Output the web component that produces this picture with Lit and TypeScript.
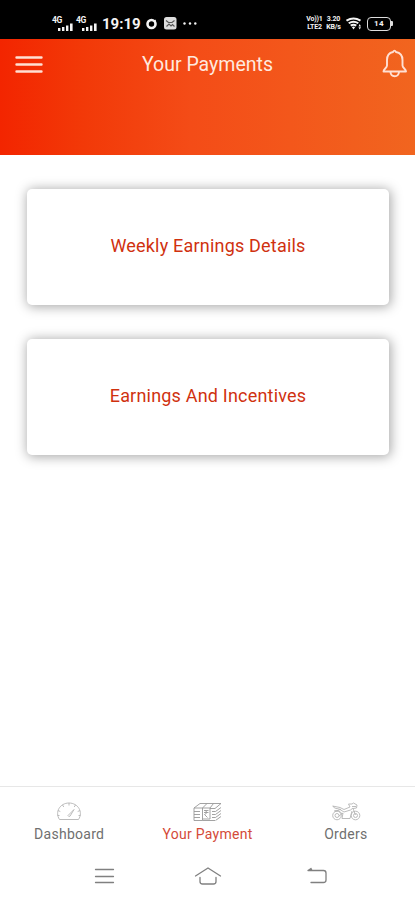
import { LitElement, html, css, svg } from "lit";
import { customElement } from "lit/decorators.js";
import { classMap } from "lit/directives/class-map.js";

const signalBars = svg`
  <rect x="0" y="5" width="2.4" height="3"/><rect x="4" y="4" width="2.4" height="4"/>
  <rect x="8" y="2.5" width="2.4" height="5.5"/><rect x="12" y="0.5" width="2.6" height="7.5"/>`;

@customElement("status-bar")
class StatusBar extends LitElement {
  static styles = css`
    :host { display: flex; height: 39px; background: #000; color: #f4f4f4; font-family: Roboto, sans-serif; box-sizing: border-box; padding: 4px 22px 0 52px; justify-content: space-between; }
    .group { display: flex; align-items: center; height: 39px; }
    .signal { display: flex; width: 24px; height: 16px; align-items: flex-start; }
    .gen { font-size: 8.5px; line-height: 8px; font-weight: 700; width: 6px; letter-spacing: -0.5px; }
    .signal svg { margin-top: 7px; }
    .clock { font-size: 15px; font-weight: 700; letter-spacing: 0; margin-left: 2px; width: 44px; line-height: 18px; }
    svg { display: block; flex: none; fill: #f4f4f4; }
    .photo { margin-left: 6px; }
    .dots { margin-left: 6px; }
    .tiny { display: flex; flex-direction: column; font-size: 7px; line-height: 8px; font-weight: 700; letter-spacing: -0.2px; text-align: center; white-space: nowrap; margin-top: -1px; }
    .tiny span { display: block; height: 8px; }
    .volte { width: 17px; margin-right: 2px; }
    .speed { width: 17px; margin-right: 4px; }
    .battery { display: flex; align-items: center; margin-left: 4px; }
    .level { box-sizing: border-box; width: 24px; height: 14px; border: 1.5px solid #ddd; border-radius: 4px; font-size: 8px; line-height: 12px; font-weight: 700; text-align: center; letter-spacing: 0.4px; }
    .tip { width: 2px; height: 5px; background: #ddd; border-radius: 0 1px 1px 0; }
  `;
  render() {
    return html`
      <div class="group">
        ${[0, 1].map(() => html`<div class="signal"><span class="gen">4G</span><svg width="15" height="8">${signalBars}</svg></div>`)}
        <span class="clock">19:19</span>
        <svg class="ring" width="12" height="12"><circle cx="5.500" cy="6" r="4" fill="none" stroke="#f4f4f4" stroke-width="2.6"/><path d="M7.500 3l2.500-1.500L9.500 4z"/></svg>
        <svg class="photo" width="13" height="13"><rect width="12.500" height="12.500" rx="2.500" fill="#ddd"/><path d="M2 3.500L4.500 5.500H8L10.500 3.500M2.500 9.500L5 7L7 9L8.500 7.500L10.500 9.500" fill="none" stroke="#555" stroke-width="1.100"/></svg>
        <svg class="dots" width="14" height="3"><circle cx="1.500" cy="1.500" r="1.200"/><circle cx="7" cy="1.500" r="1.200"/><circle cx="12.300" cy="1.500" r="1.200"/></svg>
      </div>
      <div class="group">
        <div class="tiny volte"><span>Vo))1</span><span>LTE2</span></div>
        <div class="tiny speed"><span>3.20</span><span>KB/s</span></div>
        <svg width="17" height="13" viewBox="0 0 17 13">
          <path d="M0.500 3.700Q7.500-0.800 14.500 3.700M2.700 6.300Q7.500 3 12.300 6.300M4.700 8.700Q7.500 6.800 10.300 8.700" fill="none" stroke="#f4f4f4" stroke-width="2"/>
          <path d="M5.800 10L7.500 12.500L9.200 10Q7.500 9 5.800 10ZM12.500 9.500L13.700 7L15 9.500ZM12.500 10.200H15L13.700 12.500Z"/>
        </svg>
        <div class="battery"><div class="level">14</div><div class="tip"></div></div>
      </div>`;
  }
}

@customElement("page-header")
class PageHeader extends LitElement {
  static styles = css`
    :host { display: grid; grid-template-columns: 44px 1fr 44px; height: 116px; box-sizing: border-box; padding-top: 8px; align-items: start; background: linear-gradient(90deg, #f32500 0%, #f23908 20%, #f44c17 46%, #f3571b 70%, #f1651f 100%); color: #ffe9df; font-family: Roboto, sans-serif; }
    h1 { margin: 0; text-align: center; font-weight: 400; font-size: 19.5px; line-height: 36px; letter-spacing: 0; }
    svg { display: block; fill: none; stroke: #ffe0d3; stroke-linecap: round; stroke-linejoin: round; }
    .menu { margin: 8px 0 0 15px; stroke-width: 2.4; }
    .bell { margin: 2px 0 0 11px; stroke-width: 1.9; }
  `;
  render() {
    return html`
      <svg class="menu" width="28" height="20"><path d="M1.500 2.500H26.500M1.500 9.500H26.500M1.500 16.500H26.500"/></svg>
      <h1>Your Payments</h1>
      <svg class="bell" width="26" height="30" viewBox="0 0 26 30">
        <path d="M11 3Q12.500.2 14 3C18.200 3.800 20.500 7 20.500 11V16.500C20.500 19 24 20 24 22.500H1.500C1.500 20 5 19 5 16.500V11C5 7 7.200 3.800 11 3Z"/>
        <path d="M8.500 23C8.800 28.600 16.500 28.600 17 23"/>
      </svg>`;
  }
}

@customElement("payment-card")
class PaymentCard extends LitElement {
  static styles = css`
    :host { display: flex; align-items: center; justify-content: center; height: 116px; border-radius: 5px; background: #fff; box-shadow: 1px 1px 12px 1px rgba(0, 0, 0, 0.34); color: #d0310f; font: 400 18px/22px Roboto, sans-serif; letter-spacing: 0.2px; box-sizing: border-box; padding-bottom: 3px; }
  `;
  render() {
    return html`<slot></slot>`;
  }
}

const gauge = svg`<svg width="26" height="19" viewBox="0 0 26 19"><path d="M3.500 17.500C-1.500 10 4 1 13 1S27.500 10 22.500 17.500ZM13 1V3.500M6.500 3L7.800 5M19.500 3L18.200 5M2 8.500L4.300 9.500M24 8.500L21.700 9.500M1.500 13.500H3.500M24.500 13.500H22.500"/><path d="M12 13.500L18 7.500L14 14.200Q12.500 15 12 13.500Z"/></svg>`;

const notes = svg`<svg width="29" height="20" viewBox="0 0 29 20"><path d="M1 6H9.500M1 6V18.500H9.500M1 6L7 1.500H28L22 6.500H17M9.500 6L14 1.500M17 6L20.500 1.500M9.500 6V17H17V6ZM9.500 17V18.500H22M1 9.500H7M1 12.500H7M1 15.500H7M19 9.500H22.500L28 5.500M19 12.500H22.500L28 8.500M19 15.500H22.500L28 11.500M22.500 18.500L28 14.500"/><path d="M11 8.500H15.500M11 10.500H15.500M12 8.500Q16 10.500 11.500 12.500L14.500 15.500"/></svg>`;

const bike = svg`<svg width="30" height="19" viewBox="0 0 30 19"><circle cx="6" cy="13.500" r="4.300"/><circle cx="6" cy="13.500" r="2"/><circle cx="24.500" cy="13.500" r="4.300"/><circle cx="24.500" cy="13.500" r="2"/><path d="M1.500 4L9 5.500L13 7.500L19 5L17.500 2H21L22.500 1L26 3L25.500 6L22 6.500L24.500 13M2 4L3.500 6L10 7.500M4 9.500L9 7.500L13 10L19.500 8L22 6M8 14L12 11L11 16.500H19L21 9M3 9Q8 7 11 12M21 4.500H25"/></svg>`;

const tabs = [
  { label: "Dashboard", icon: gauge, active: false },
  { label: "Your Payment", icon: notes, active: true },
  { label: "Orders", icon: bike, active: false },
];

@customElement("tab-bar")
class TabBar extends LitElement {
  static styles = css`
    :host { display: grid; grid-template-columns: repeat(3, 1fr); height: 66px; box-sizing: border-box; border-top: 1px solid #e7e7e7; font: 400 14px/18px Roboto, sans-serif; letter-spacing: 0.28px; color: #6f6f6f; }
    .tab { display: flex; flex-direction: column; align-items: center; padding-top: 15px; }
    .icon { height: 23px; }
    .icon svg { display: block; fill: none; stroke: #b4b4b4; stroke-width: 0.9; stroke-linejoin: round; }
    .active { color: #d44a38; }
    .active .icon svg { stroke: #999; }
  `;
  render() {
    return tabs.map(
      (t) => html`<div class=${classMap({ tab: true, active: t.active })}><div class="icon">${t.icon}</div><span>${t.label}</span></div>`
    );
  }
}

@customElement("system-keys")
class SystemKeys extends LitElement {
  static styles = css`
    :host { display: grid; grid-template-columns: 21px 28px 22px; column-gap: 79px; height: 48px; box-sizing: border-box; padding: 13px 0 0 94px; }
    svg { display: block; fill: none; stroke: #808080; stroke-width: 1.3; stroke-linejoin: round; stroke-linecap: round; }
    .back { margin-left: 6px; }
  `;
  render() {
    return html`
      <svg width="21" height="22"><path d="M1.500 4.500H19.500M1.500 11.500H19.500M1.500 17.500H19.500"/></svg>
      <svg width="28" height="22"><path d="M1.500 11L14 3L26.500 11M6 12.500V16.500Q6 19 8.500 19H19.500Q22 19 22 16.500V12.500"/></svg>
      <svg class="back" width="22" height="22"><path d="M4 3.500L1 5.500H16.500Q19 5.500 19 8V15Q19 17.500 16.500 17.500H4M1 5.500H5L4 3.500"/></svg>`;
  }
}

@customElement("app-root")
class AppRoot extends LitElement {
  static styles = css`
    :host { display: flex; flex-direction: column; width: 415px; height: 900px; background: #fff; overflow: hidden; }
    main { flex: 1; display: flex; flex-direction: column; gap: 34px; padding: 34px 26px 0 27px; }
  `;
  render() {
    return html`
      <status-bar></status-bar>
      <page-header></page-header>
      <main>
        <payment-card>Weekly Earnings Details</payment-card>
        <payment-card>Earnings And Incentives</payment-card>
      </main>
      <tab-bar></tab-bar>
      <system-keys></system-keys>`;
  }
}
